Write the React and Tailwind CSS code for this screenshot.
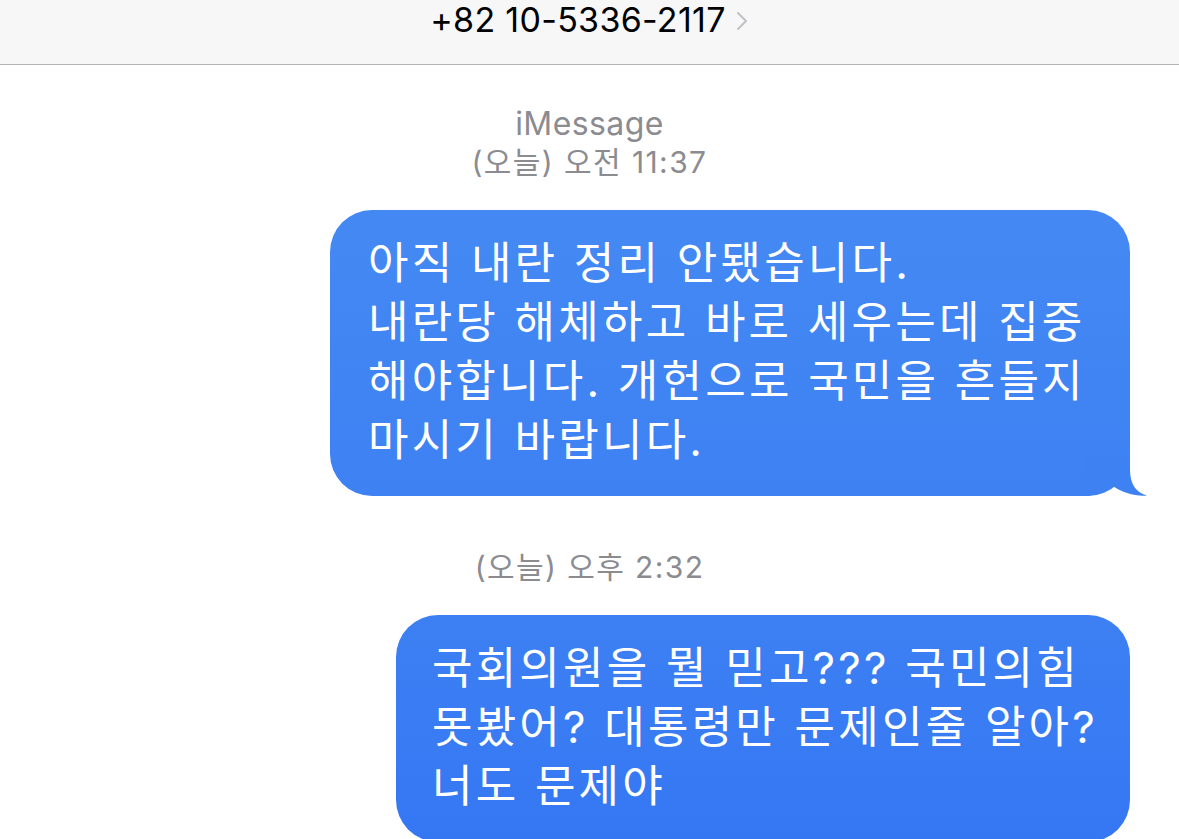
import React from 'react';

const latin = { fontFamily: 'Inter, "Noto Sans CJK KR", sans-serif' };

const Tail = () => (
    <svg className="absolute right-[-17px] bottom-0" width="62" height="41" viewBox="0 0 62 41">
        <path d="M45 0 L45 15 C45 30 52 38 62 40.5 C52 41.5 38 39 25 29 C18 35 10 41 0 41 L0 0 Z" fill="#3e81f3" />
    </svg>
);

const Bubble = ({ lines, tail, className }) => (
    <div className={`relative ml-auto mr-[49px] rounded-[42px] text-white text-[44px] tracking-[3.2px] leading-[59px] pt-[24px] pb-[26px] ${className}`}>
        {lines.map((l, i) => (
            <div key={i} className="whitespace-nowrap">{l}</div>
        ))}
        {tail && <Tail />}
    </div>
);

export default function App() {
    return (
        <div className="w-[1179px] h-[839px] overflow-hidden bg-white" style={latin}>
            {/* Header */}
            <div className="h-[65px] bg-[#f7f7f7] border-b border-[#b4b4b4] flex justify-center items-start">
                <div className="flex items-center mt-[-4px]">
                    <span className="text-[34px] leading-[48px] text-black tracking-[0.3px]">+82 10-5336-2117</span>
                    <svg className="ml-[10px] mt-[2px]" width="13" height="20" viewBox="0 0 13 20">
                        <polyline points="2,2 10,10 2,18" fill="none" stroke="#c2c2c6" strokeWidth="2" strokeLinecap="round" strokeLinejoin="round" />
                    </svg>
                </div>
            </div>

            {/* Conversation */}
            <div className="flex flex-col">
                <div className="mt-[40px] text-center text-[#8b8b90] text-[32px] tracking-[0.4px] leading-[38px]">iMessage</div>
                <div className="text-center text-[#8b8b90] text-[30px] tracking-[1.4px] leading-[38px]">(오늘) 오전 11:37</div>

                <Bubble
                    className="mt-[29px] w-[800px] pl-[38px] bg-linear-to-b from-[#4489f3] to-[#3e81f3]"
                    tail
                    lines={[
                        '아직 내란 정리 안됐습니다.',
                        '내란당 해체하고 바로 세우는데 집중',
                        '해야합니다. 개헌으로 국민을 흔들지',
                        '마시기 바랍니다.',
                    ]}
                />

                <div className="mt-[52px] text-center text-[#8b8b90] text-[30px] tracking-[1.4px] leading-[38px]">(오늘) 오후 2:32</div>

                <Bubble
                    className="mt-[29px] w-[734px] pl-[36px] bg-linear-to-b from-[#3d80f3] to-[#3577f3]"
                    lines={[
                        '국회의원을 뭘 믿고??? 국민의힘',
                        '못봤어? 대통령만 문제인줄 알아?',
                        '너도 문제야',
                    ]}
                />
            </div>
        </div>
    );
}
